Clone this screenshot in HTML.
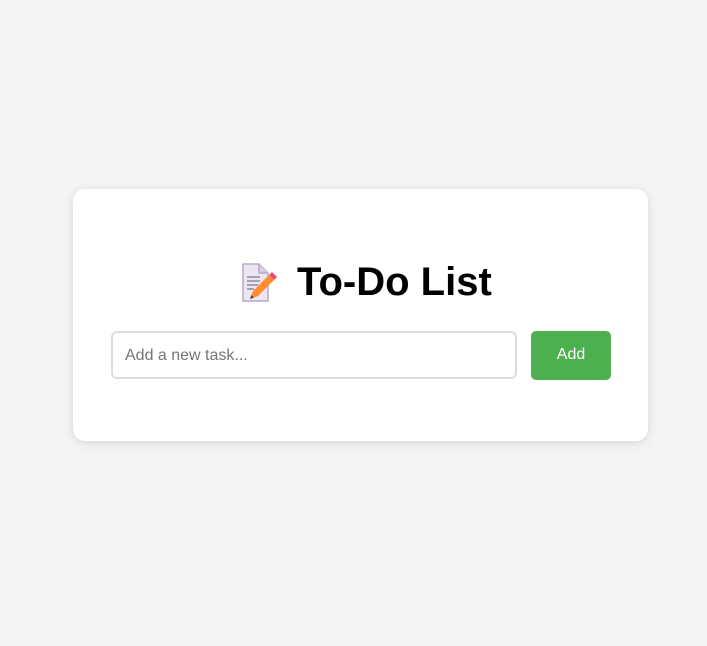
<!DOCTYPE html>
<html><head><style>
body{margin:0;background:#f4f4f4;width:707px;height:646px;position:relative;font-family:"Liberation Sans",sans-serif}
.card{position:absolute;left:73px;top:189px;width:575px;height:252px;background:#fff;border-radius:12px;box-shadow:0 2px 10px rgba(0,0,0,0.12)}
h1{position:absolute;left:297px;top:258px;margin:0;font-size:40px;font-weight:bold;line-height:48px;color:#000}
svg{position:absolute;left:240px;top:262px}
.inp{position:absolute;left:111px;top:331px;border:2px solid #ddd;border-radius:6px;width:402px;height:44px}
.inp span{position:absolute;left:12px;top:14px;font-size:16px;color:#757575}
.btn{position:absolute;left:531px;top:331px;width:80px;height:49px;background:#4caf50;border-radius:5px;color:#fff;font-size:16px;text-align:center;line-height:48px}
</style></head><body>
<div class="card"></div>
<svg width="40" height="40" viewBox="0 0 40 40">
<path d="M3 2h16l9 9v28H3z" fill="#ece6f2" stroke="#b8a8c6" stroke-width="1.5" stroke-linejoin="round"/>
<path d="M19 2v9h9" fill="#d9cfe4" stroke="#b8a8c6" stroke-width="1.5"/>
<g stroke="#8e8a9a" stroke-width="1.5"><line x1="7" y1="15" x2="20" y2="15"/><line x1="7" y1="19" x2="20" y2="19"/><line x1="7" y1="23" x2="18" y2="23"/><line x1="7" y1="27" x2="14" y2="27"/></g>
<path d="M10 37l3-8 16-16 5 5-16 16z" fill="#ff8c2e"/>
<path d="M29 13l3-3 5 5-3 3z" fill="#f0476a"/>
<path d="M10 37l1.5-4 2.5 2.5z" fill="#444"/>
</svg>
<h1>To-Do List</h1>
<div class="inp"><span>Add a new task...</span></div>
<div class="btn">Add</div>
</body></html>
